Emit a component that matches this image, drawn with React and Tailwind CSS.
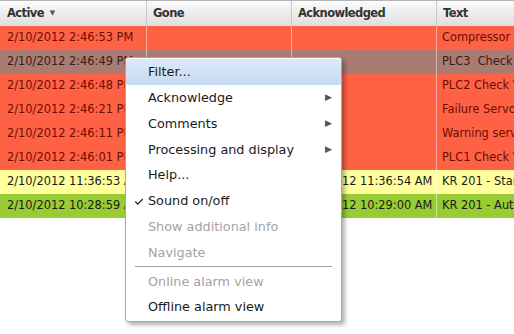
import { Check } from "lucide-react";

const rows = [
  { bg: "bg-[#ff6145]", text: "text-[#6b0d00]", active: "2/10/2012 2:46:53 PM", gone: "", ack: "", msg: "Compressor pressure too low" },
  { bg: "bg-[#a97b72]", text: "text-[#3b1a12]", active: "2/10/2012 2:46:49 PM", gone: "", ack: "", msg: "PLC3  Check valve 2" },
  { bg: "bg-[#ff6145]", text: "text-[#6b0d00]", active: "2/10/2012 2:46:48 PM", gone: "", ack: "", msg: "PLC2 Check Valve 3" },
  { bg: "bg-[#ff6145]", text: "text-[#6b0d00]", active: "2/10/2012 2:46:21 PM", gone: "", ack: "", msg: "Failure Servo drive" },
  { bg: "bg-[#ff6145]", text: "text-[#6b0d00]", active: "2/10/2012 2:46:11 PM", gone: "", ack: "", msg: "Warning servo temperature" },
  { bg: "bg-[#ff6145]", text: "text-[#6b0d00]", active: "2/10/2012 2:46:01 PM", gone: "", ack: "", msg: "PLC1 Check Valve 1" },
  { bg: "bg-[#ffff9c]", text: "text-[#1a1a1a]", active: "2/10/2012 11:36:53 AM", gone: "", ack: "2/10/2012 11:36:54 AM", msg: "KR 201 - Started" },
  { bg: "bg-[#99cc33]", text: "text-[#1a1a1a]", active: "2/10/2012 10:28:59 AM", gone: "", ack: "2/10/2012 10:29:00 AM", msg: "KR 201 - Automatic mode" },
];

const menu = [
  { label: "Filter...", hot: true },
  { label: "Acknowledge", sub: true },
  { label: "Comments", sub: true },
  { label: "Processing and display", sub: true },
  { label: "Help..." },
  { label: "Sound on/off", checked: true },
  { label: "Show additional info", off: true },
  { label: "Navigate", off: true },
  { sep: true },
  { label: "Online alarm view", off: true },
  { label: "Offline alarm view" },
];

const cols = "grid grid-cols-[146px_145px_145px_78px]";

export default function App() {
  return (
    <div
      className="relative w-[514px] h-[334px] overflow-hidden bg-white"
      style={{ fontFamily: '"DejaVu Sans", Verdana, sans-serif' }}
    >
      {/* header */}
      <div className={`${cols} h-[26px] border-t border-[#b4b4b4] bg-gradient-to-b from-[#fbfbfb] to-[#dedede] text-[11.5px] tracking-[-0.6px] font-bold text-[#333]`}>
        <div className="flex items-center pl-[7px]">
          Active <span className="ml-[6px] text-[7px] text-[#555]">▼</span>
        </div>
        <div className="flex items-center pl-[6px] border-l border-[#c8c8c8]">Gone</div>
        <div className="flex items-center pl-[6px] border-l border-[#c8c8c8]">Acknowledged</div>
        <div className="flex items-center pl-[6px] border-l border-[#c8c8c8]">Text</div>
      </div>

      {/* rows */}
      {rows.map((r, i) => (
        <div key={i} className={`${cols} h-[24px] text-[11.4px] ${r.bg} ${r.text}`}>
          <div className="flex items-center pl-[7px] whitespace-nowrap overflow-hidden">{r.active}</div>
          <div className="flex items-center pl-[6px] whitespace-nowrap overflow-hidden border-l border-white/50">{r.gone}</div>
          <div className="flex items-center pl-[6px] whitespace-nowrap overflow-hidden border-l border-white/50">{r.ack}</div>
          <div className="flex items-center pl-[5px] whitespace-pre overflow-hidden border-l border-white/50">{r.msg}</div>
        </div>
      ))}

      {/* context menu */}
      <div className="absolute left-[125px] top-[57px] w-[217px] rounded-[3px] border border-[#a8a8a8] bg-white py-[1px] shadow-[3px_3px_4px_rgba(0,0,0,0.3)] text-[12.8px] text-[#1a1a1a]">
        {menu.map((m, i) =>
          m.sep ? (
            <div key={i} className="mx-[9px] my-[1px] h-px bg-[#a0a0a0]" />
          ) : (
            <div
              key={i}
              className={`relative flex h-[25.8px] items-center pl-[22px] pr-[9px] rounded-[2px] ${
                m.hot ? "bg-gradient-to-b from-[#dde9f8] to-[#c6daf2]" : ""
              } ${m.off ? "text-[#a3a3a3]" : ""}`}
            >
              {m.checked && (
                <Check className="absolute left-[8px] top-[9px] h-[10px] w-[10px]" strokeWidth={3} />
              )}
              <span className="flex-1">{m.label}</span>
              {m.sub && <span className="text-[9px] text-[#555]">▶</span>}
            </div>
          )
        )}
      </div>
    </div>
  );
}
